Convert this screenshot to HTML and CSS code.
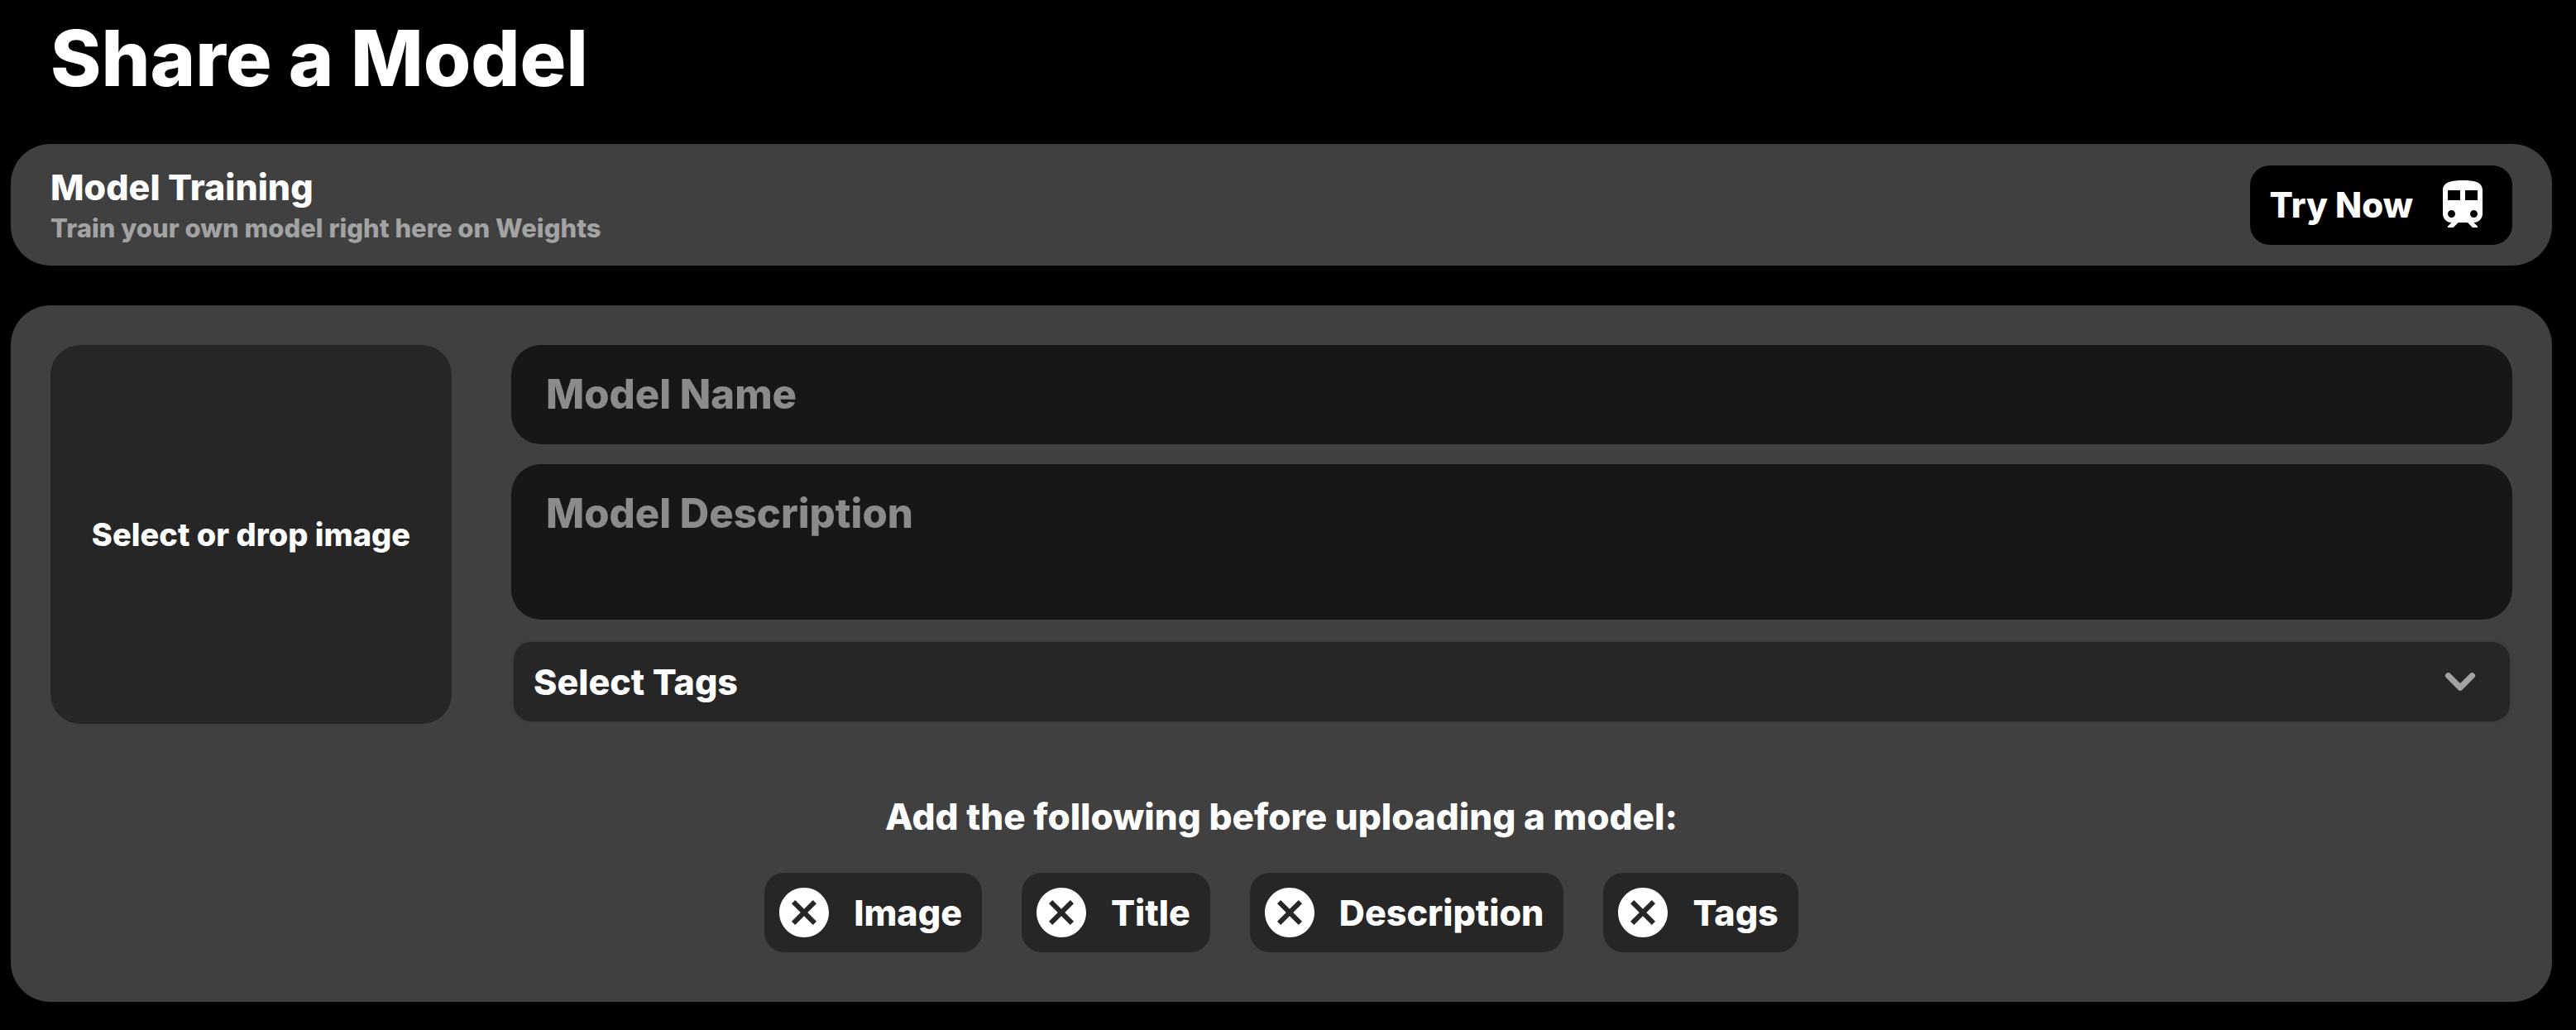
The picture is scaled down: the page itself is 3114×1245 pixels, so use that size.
FILE: index.html
```html
<!DOCTYPE html>
<html lang="en">
<head>
    <meta charset="UTF-8">
    <title>Share a Model</title>
    <link rel="stylesheet" href="styles.css">
</head>
<body>
    <svg class="sprite" aria-hidden="true">
        <symbol id="cross" viewBox="0 0 24 24">
            <path d="M12 2C6.47 2 2 6.47 2 12s4.47 10 10 10 10-4.47 10-10S17.53 2 12 2zm5 13.59L15.59 17 12 13.41 8.41 17 7 15.59 10.59 12 7 8.41 8.41 7 12 10.59 15.59 7 17 8.41 13.41 12 17 15.59z"/>
        </symbol>
    </svg>

    <h1 class="pageTitle">Share a Model</h1>

    <section class="card training">
        <div class="trainingText">
            <h2 class="label">Model Training</h2>
            <p class="subtitle">Train your own model right here on Weights</p>
        </div>
        <button class="tryButton" type="button">
            Try Now
            <svg class="icon" viewBox="0 0 24 24" aria-hidden="true">
                <path d="M12 2c-4 0-8 .5-8 4v9.5C4 17.43 5.57 19 7.5 19L6 20.5v.5h2.23l2-2H14l2 2h2v-.5L16.5 19c1.93 0 3.5-1.57 3.5-3.5V6c0-3.5-3.58-4-8-4zM7.5 17c-.83 0-1.5-.67-1.5-1.5S6.67 14 7.5 14s1.5.67 1.5 1.5S8.33 17 7.5 17zm3.5-7H6V6h5v4zm2 0V6h5v4h-5zm3.5 7c-.83 0-1.5-.67-1.5-1.5s.67-1.5 1.5-1.5 1.5.67 1.5 1.5-.67 1.5-1.5 1.5z"/>
            </svg>
        </button>
    </section>

    <form class="card upload">
        <div class="formRow">
            <label class="imageDrop">
                Select or drop image
                <input class="fileInput" type="file" name="image" accept="image/*">
            </label>
            <div class="fields">
                <input class="field" type="text" name="name" placeholder="Model Name" aria-label="Model Name">
                <textarea class="field description" name="description" placeholder="Model Description" aria-label="Model Description"></textarea>
                <div class="selectWrap">
                    <select class="tagSelect label" name="tags" aria-label="Select Tags">
                        <option>Select Tags</option>
                    </select>
                    <svg class="icon chevron" viewBox="0 0 20 20" aria-hidden="true">
                        <path fill-rule="evenodd" d="M5.293 7.293a1 1 0 011.414 0L10 10.586l3.293-3.293a1 1 0 111.414 1.414l-4 4a1 1 0 01-1.414 0l-4-4a1 1 0 010-1.414z"/>
                    </svg>
                </div>
            </div>
        </div>

        <h2 class="label requirements">Add the following before uploading a model:</h2>
        <ul class="chips">
            <li class="chip label"><svg class="icon" aria-hidden="true"><use href="#cross"/></svg>Image</li>
            <li class="chip label"><svg class="icon" aria-hidden="true"><use href="#cross"/></svg>Title</li>
            <li class="chip label"><svg class="icon" aria-hidden="true"><use href="#cross"/></svg>Description</li>
            <li class="chip label"><svg class="icon" aria-hidden="true"><use href="#cross"/></svg>Tags</li>
        </ul>
    </form>
</body>
</html>
```
FILE: styles.css
```css
*{
    margin: 0;
    padding: 0;
    box-sizing: border-box;
}
body{
    padding: 0 29px 34px 13px;
    background-color: #000;
    color: #fff;
    font-family: Inter, "Open Sans", sans-serif;
    font-weight: 800;
}
input, textarea, select, button{
    border: none;
    outline: none;
    color: inherit;
    font: inherit;
}
.sprite{
    display: none;
}
.icon{
    flex: none;
    width: 72px;
    height: 72px;
    fill: currentColor;
}
.pageTitle{
    padding: 10px 48px 44px;
    font-size: 93px;
    font-weight: 800;
    line-height: 120px;
}
.label{
    font-size: 43px;
    font-weight: 800;
    line-height: 60px;
}
.card{
    border-radius: 48px;
    background-color: #404040;
}
/* training banner */
.training{
    display: flex;
    align-items: center;
    justify-content: space-between;
    margin-bottom: 48px;
    padding: 24px 48px;
}
.trainingText .label{
    line-height: 56px;
}
.subtitle{
    color: #a3a3a3;
    font-size: 31px;
    line-height: 43px;
}
.tryButton{
    display: flex;
    align-items: center;
    gap: 24px;
    padding: 12px 24px;
    border-radius: 24px;
    background-color: #000;
    font-size: 42px;
}
/* upload form */
.upload{
    padding: 48px 48px 60px;
}
.formRow{
    display: flex;
    gap: 72px;
}
.imageDrop{
    display: flex;
    flex: none;
    align-items: center;
    justify-content: center;
    width: 485px;
    border-radius: 36px;
    background-color: #262626;
    font-size: 38px;
    cursor: pointer;
}
.fileInput{
    display: none;
}
.fields{
    display: flex;
    flex: 1;
    flex-direction: column;
    gap: 24px;
}
.field{
    width: 100%;
    padding: 24px 42px;
    border-radius: 36px;
    background-color: #171717;
    font-size: 49px;
    line-height: 72px;
}
.field::placeholder{
    color: #8b8b8b;
    opacity: 1;
}
.description{
    display: block;
    height: 188px;
    resize: none;
}
.selectWrap{
    position: relative;
}
.tagSelect{
    display: block;
    width: 100%;
    padding: 18px 24px;
    border: 3px solid #3d3d3d;
    border-radius: 24px;
    background-color: #262626;
    appearance: none;
}
.chevron{
    position: absolute;
    top: 15px;
    right: 27px;
    color: #a3a3a3;
    pointer-events: none;
}
.requirements{
    margin: 82px 0 38px;
    font-size: 44px;
    text-align: center;
}
.chips{
    display: flex;
    flex-wrap: wrap;
    justify-content: center;
    gap: 48px;
    list-style: none;
}
.chip{
    display: flex;
    align-items: center;
    gap: 24px;
    padding: 12px 24px 12px 12px;
    border-radius: 24px;
    background-color: #262626;
}
```
